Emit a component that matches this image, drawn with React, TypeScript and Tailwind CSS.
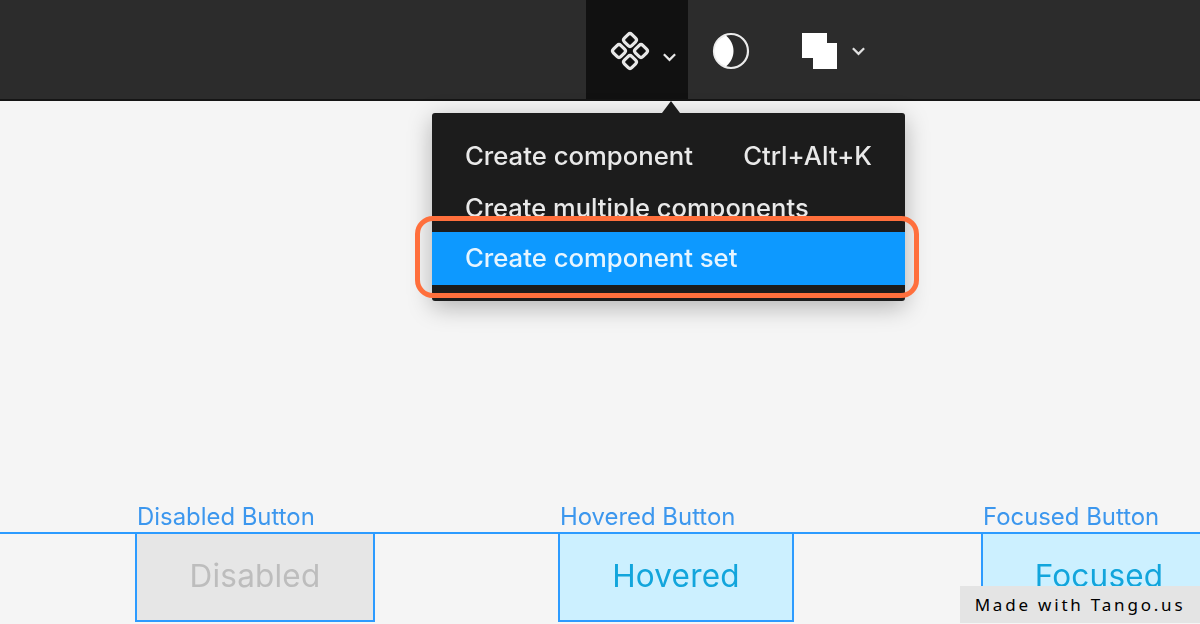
const Chevron = ({ className }: { className: string }) => (
  <svg viewBox="0 0 16 10" className={className} fill="none" stroke="currentColor" strokeWidth="2.400">
    <path d="M2 2l6 6 6-6" />
  </svg>
);

const ComponentIcon = () => (
  <svg viewBox="0 0 42 42" className="w-[42px] h-[42px] text-[#e8e8e8]" fill="none" stroke="currentColor" strokeWidth="3.200">
    <rect x="15.750" y="4.750" width="10.500" height="10.500" rx="2.500" transform="rotate(45 21 10)" />
    <rect x="15.750" y="26.750" width="10.500" height="10.500" rx="2.500" transform="rotate(45 21 32)" />
    <rect x="4.750" y="15.750" width="10.500" height="10.500" rx="2.500" transform="rotate(45 10 21)" />
    <rect x="26.750" y="15.750" width="10.500" height="10.500" rx="2.500" transform="rotate(45 32 21)" />
  </svg>
);

const ContrastIcon = () => (
  <svg viewBox="0 0 38 38" className="w-[38px] h-[38px]" fill="none">
    <circle cx="19" cy="19" r="17" stroke="#ececec" strokeWidth="2.200" />
    <path d="M14 3.500C6.500 6 2.500 12 2.500 19s4 13 11.500 15.500C19 30 21.500 25 21.500 19S19 8 14 3.500z" fill="#fff" />
  </svg>
);

const LayersIcon = () => (
  <svg viewBox="0 0 38 38" className="w-[38px] h-[38px]" fill="#fff">
    <path d="M1 1h25v10h10v26H12V26H1z" />
  </svg>
);

const Variant = ({ label, text, className, textClass, mr }: { label: string; text: string; className: string; textClass: string; mr: string }) => (
  <div className={`shrink-0 relative ${mr}`}>
    <div className="absolute left-[2px] top-[-31px] whitespace-nowrap text-[23.900px] leading-[28px] text-[#3c97ee] blur-[0.4px]">{label}</div>
    <div className={`h-[88px] pb-[3px] border-x-2 border-b-2 border-[#2c9bff] flex items-center justify-center ${className}`}>
      <span className={`text-[31.500px] tracking-[0.2px] blur-[0.4px] ${textClass}`}>{text}</span>
    </div>
  </div>
);

export default function App() {
  return (
    <div className="w-[1200px] h-[624px] overflow-hidden relative bg-[#f5f5f5] font-['Inter',sans-serif]">
      <header className="h-[101px] bg-[#2c2c2c] border-b-2 border-[#151515] flex pl-[586px]">
        <div className="w-[102px] bg-[#111111] flex items-center pl-[23px] pt-[2px]">
          <ComponentIcon />
          <Chevron className="w-[15px] h-[10px] mt-[12px] ml-[11px] text-[#e8e8e8]" />
        </div>
        <div className="ml-[24px] pt-[2px] flex items-center"><ContrastIcon /></div>
        <div className="ml-[51px] pt-[2px] flex items-center"><LayersIcon /></div>
        <div className="ml-[12px] pt-[2px] flex items-center"><Chevron className="w-[15px] h-[10px] text-[#e0e0e0]" /></div>
      </header>

      <div className="absolute left-[432px] top-[113px] w-[473px] h-[188px] rounded-[3px] bg-[#1c1c1c] shadow-[0_6px_24px_rgba(0,0,0,0.28)] flex flex-col overflow-hidden">
        <div className="h-[24px] shrink-0" />
        <div className="h-[38px] shrink-0 pl-[33px] pr-[33px] flex justify-between items-center text-[25.700px] font-medium text-[#e9e9e9] blur-[0.5px] whitespace-nowrap">
          <span>Create component</span>
          <span>Ctrl+Alt+K</span>
        </div>
        <div className="h-[50px] shrink-0 pl-[33px] pt-[14px] text-[25.500px] leading-[38px] font-medium text-[#e9e9e9] blur-[0.5px] whitespace-nowrap">
          Create multiple components
        </div>
        <div className="h-[11px] shrink-0 bg-[#1c1c1c] relative -mt-[4px]" />
        <div className="h-[53px] shrink-0 bg-[#0d99ff] pl-[33px] flex items-center text-[25.700px] font-medium text-[#e6f5ff] whitespace-nowrap">
          <span className="blur-[0.5px]">Create component set</span>
        </div>
      </div>

      <div className="absolute left-[662px] top-[101px] w-[18px] h-[12px] bg-[#1c1c1c] [clip-path:polygon(50%_0,100%_100%,0_100%)]" />
      <div className="absolute left-[415px] top-[216px] w-[504px] h-[82px] rounded-[18px] border-[5px] border-[#ff6f3c]" />

      <section className="absolute inset-x-0 top-[532px] border-t-2 border-[#2c9bff] flex pl-[135px]">
        <Variant label="Disabled Button" text="Disabled" mr="mr-[183px]" className="w-[240px] bg-[#e6e6e6]" textClass="text-[#bdbdbd]" />
        <Variant label="Hovered Button" text="Hovered" mr="mr-[187px]" className="w-[236px] bg-[#ccf0ff]" textClass="text-[#12a5dc]" />
        <Variant label="Focused Button" text="Focused" mr="" className="w-[236px] bg-[#ccf0ff]" textClass="text-[#12a5dc]" />
      </section>

      <div className="absolute right-0 top-[586px] w-[240px] h-[37px] bg-[#e4e4e4] flex items-center justify-center text-[17px] tracking-[2.800px] text-black font-['Noto_Sans',sans-serif]">
        Made with Tango.us
      </div>
    </div>
  );
}
